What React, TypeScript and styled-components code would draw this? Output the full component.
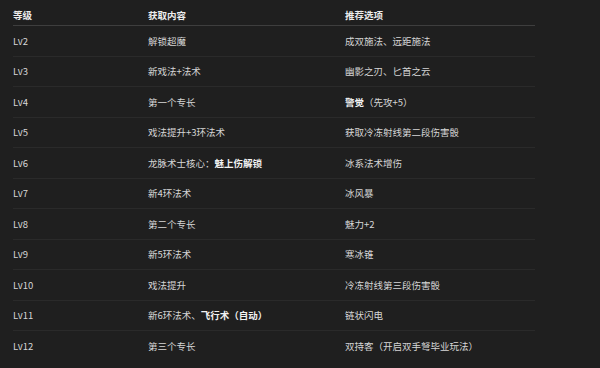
import React from "react";
import styled, { createGlobalStyle } from "styled-components";

const Global = createGlobalStyle`
  html, body { margin: 0; padding: 0; background: #1f1f1f; }
  body { font-family: "Noto Sans CJK SC", "Noto Sans", sans-serif; }
`;

const Page = styled.div`
  width: 600px;
  height: 368px;
  background: #1f1f1f;
  overflow: hidden;
  padding: 0 65px 0 13px;
  box-sizing: border-box;
`;

const Table = styled.div`
  display: flex;
  flex-direction: column;
  width: 522px;
`;

const Row = styled.div<{ $head?: boolean; $last?: boolean }>`
  display: grid;
  grid-template-columns: 135px 197px 1fr;
  align-items: center;
  box-sizing: border-box;
  height: ${(p) => (p.$head ? "26px" : "30.5px")};
  border-bottom: ${(p) =>
    p.$head ? "1px solid #3e3e3e" : p.$last ? "none" : "1px solid #2a2a2a"};
  padding-top: ${(p) => (p.$head ? "5px" : "0")};
  font-size: 9.5px;
  line-height: 14px;
  color: ${(p) => (p.$head ? "#ececec" : "#d6d6d6")};
  font-weight: ${(p) => (p.$head ? 700 : 400)};
`;

const Cell = styled.div`
  white-space: nowrap;
`;

const Strong = styled.b`
  font-weight: 700;
  color: #f2f2f2;
`;

type R = [string, React.ReactNode, React.ReactNode];

const rows: R[] = [
  ["Lv2", "解锁超魔", "成双施法、远距施法"],
  ["Lv3", "新戏法+法术", "幽影之刃、匕首之云"],
  ["Lv4", "第一个专长", <><Strong>警觉</Strong>（先攻+5）</>],
  ["Lv5", "戏法提升+3环法术", "获取冷冻射线第二段伤害骰"],
  ["Lv6", <>龙脉术士核心：<Strong>魅上伤解锁</Strong></>, "冰系法术增伤"],
  ["Lv7", "新4环法术", "冰风暴"],
  ["Lv8", "第二个专长", "魅力+2"],
  ["Lv9", "新5环法术", "寒冰锥"],
  ["Lv10", "戏法提升", "冷冻射线第三段伤害骰"],
  ["Lv11", <>新6环法术、<Strong>飞行术（自动）</Strong></>, "链状闪电"],
  ["Lv12", "第三个专长", "双持客（开启双手弩毕业玩法）"],
];

export default function App() {
  return (
    <Page>
      <Global />
      <Table>
        <Row $head>
          <Cell>等级</Cell>
          <Cell>获取内容</Cell>
          <Cell>推荐选项</Cell>
        </Row>
        {rows.map(([a, b, c], i) => (
          <Row key={a} $last={i === rows.length - 1}>
            <Cell>{a}</Cell>
            <Cell>{b}</Cell>
            <Cell>{c}</Cell>
          </Row>
        ))}
      </Table>
    </Page>
  );
}
